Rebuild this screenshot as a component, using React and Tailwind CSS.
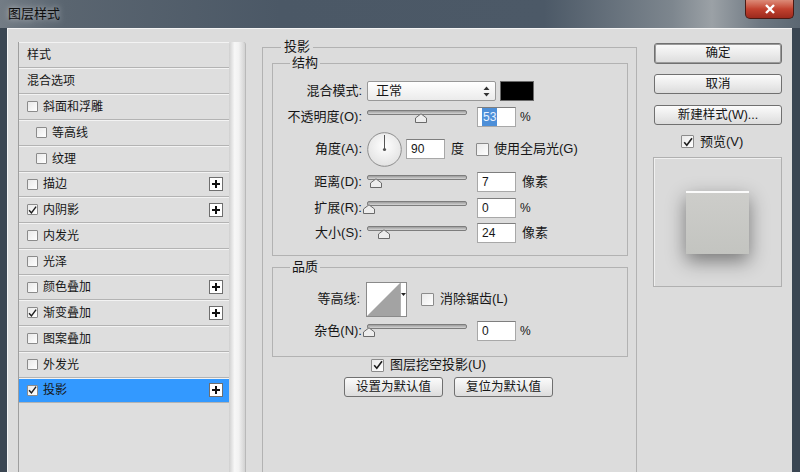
import React from 'react';

function Check({ checked, small }) {
  return (
    <span
      className={
        small
          ? 'inline-flex w-[11px] h-[11px] items-center justify-center border border-[#8b8b8b] bg-gradient-to-br from-[#e9e9e9] to-white shrink-0 rounded-[1px]'
          : 'inline-flex w-[13px] h-[13px] items-center justify-center border border-[#8b8b8b] bg-gradient-to-br from-[#e9e9e9] to-white shrink-0 rounded-[1px]'
      }
    >
      {checked && (
        <svg width="10" height="10" viewBox="0 0 10 10">
          <path d="M1.2 5.2 L3.8 8.2 L9 1.2" stroke="#1d1d1d" strokeWidth="1.6" fill="none" />
        </svg>
      )}
    </span>
  );
}

function Plus() {
  return (
    <span className="ml-auto mr-[6px] w-[14px] h-[14px] bg-white border border-[#6e6e6e] flex items-center justify-center shrink-0">
      <svg width="10" height="10" viewBox="0 0 10 10">
        <path d="M5 1 V9 M1 5 H9" stroke="#111" strokeWidth="2" />
      </svg>
    </span>
  );
}

function Slider({ pos }) {
  return (
    <div className="relative w-[100px] h-[14px] ml-[5px] shrink-0">
      <div className="h-[5px] rounded-[2px] border border-[#7d7d7d] bg-gradient-to-b from-[#9c9c9c] to-[#d6d6d6]" />
      <svg className="absolute top-[3px]" style={{ left: pos - 6 }} width="12" height="10" viewBox="0 0 12 10">
        <path d="M0.5 9.5 V5 L6 0.8 L11.5 5 V9.5 Z" fill="#ededed" stroke="#6a6a6a" />
      </svg>
    </div>
  );
}

function Field({ children, ml = 'ml-[10px]' }) {
  return (
    <div className={`${ml} w-[39px] h-[20px] bg-white border border-[#a8a8a8] border-t-[#7e7e7e] flex items-center pl-[4px] text-[12px] shrink-0`}>
      {children}
    </div>
  );
}

function Label({ children, w = 'w-[89px]' }) {
  return <div className={`${w} text-right text-[13px] shrink-0 whitespace-nowrap`}>{children}</div>;
}

function Btn({ children, className = '' }) {
  return (
    <div
      className={`h-[20px] rounded-[3px] border border-[#707070] bg-gradient-to-b from-[#fbfbfb] via-[#ececec] to-[#dcdcdc] text-[12.5px] flex items-center justify-center shrink-0 ${className}`}
    >
      {children}
    </div>
  );
}

const rows = [
  { t: '样式', h: 'h-[26px]' },
  { t: '混合选项', h: 'h-[26px]' },
  { t: '斜面和浮雕', cb: false, h: 'h-[26px]' },
  { t: '等高线', cb: false, indent: true, h: 'h-[26px]' },
  { t: '纹理', cb: false, indent: true, h: 'h-[26px]' },
  { t: '描边', cb: false, plus: true, h: 'h-[25px]' },
  { t: '内阴影', cb: true, plus: true, h: 'h-[26px]' },
  { t: '内发光', cb: false, h: 'h-[26px]' },
  { t: '光泽', cb: false, h: 'h-[26px]' },
  { t: '颜色叠加', cb: false, plus: true, h: 'h-[25px]' },
  { t: '渐变叠加', cb: true, plus: true, h: 'h-[26px]' },
  { t: '图案叠加', cb: false, h: 'h-[26px]' },
  { t: '外发光', cb: false, h: 'h-[26px]' },
  { t: '投影', cb: true, plus: true, sel: true, h: 'h-[25px]' },
];

export default function App() {
  return (
    <div className="w-[800px] h-[472px] overflow-hidden bg-[#3a4652] font-['Liberation_Sans','Noto_Sans_CJK_SC',sans-serif] text-[#161616] flex flex-col">
      {/* Title bar */}
      <div className="h-[28px] shrink-0 flex items-start bg-[linear-gradient(90deg,#737c85_0%,#5a6570_8%,#4b5866_35%,#4c5967_68%,#7d868e_84%,#9ba1a6_89%,#6e7882_95%,#5b6772_100%)]">
        <div className="pl-[8px] leading-[28px] text-[13px] text-[#0d0d0d] [text-shadow:0_0_6px_rgba(255,255,255,0.7)]">图层样式</div>
        <div className="ml-auto mr-[6px] w-[49px] h-[19px] rounded-b-[5px] border border-t-0 border-[#4a1a14] bg-gradient-to-b from-[#dc8a78] via-[#c2412f] to-[#9c2a1d] flex items-center justify-center">
          <svg width="12" height="10" viewBox="0 0 12 10">
            <path d="M2 1 L10 9 M10 1 L2 9" stroke="#fff" strokeWidth="2.4" />
          </svg>
        </div>
      </div>

      {/* Body */}
      <div className="flex-1 ml-[7px] mr-[8px] bg-[#dcdcdc] border-l border-t border-[#f4f4f4] flex items-start overflow-hidden">
        {/* Left list */}
        <div className="ml-[10px] mt-[13px] flex shrink-0">
          <div className="w-[211px] h-[440px] border-l border-[#9e9e9e] bg-[#dedede] text-[12px]">
            {rows.map((r) => (
              <div
                key={r.t}
                className={`${r.h} flex items-center border-b border-[#b3b3b3] shadow-[inset_0_1px_0_#f3f3f3] ${r.sel ? 'bg-[#3399ff]' : ''}`}
              >
                {r.cb === undefined ? (
                  <span className="pl-[8px]">{r.t}</span>
                ) : (
                  <>
                    <span className={r.indent ? 'pl-[17px] flex' : 'pl-[8px] flex'}>
                      <Check small checked={r.cb} />
                    </span>
                    <span className="ml-[5px]">{r.t}</span>
                    {r.plus && <Plus />}
                  </>
                )}
              </div>
            ))}
          </div>
          <div className="w-[17px] h-[440px] rounded-t-[3px] border-r border-[#b9b9b9] bg-[linear-gradient(90deg,#cfcfcf_0%,#f7f7f7_35%,#f2f2f2_60%,#d2d2d2_100%)]" />
        </div>

        {/* Middle */}
        <fieldset className="ml-[16px] mt-[10px] w-[375px] h-[440px] border border-b-0 border-[#b2b2b2] shrink-0">
          <legend className="ml-[18px] px-[3px] text-[13px] leading-[16px]">投影</legend>

          <fieldset className="ml-[9px] w-[356px] border border-[#b2b2b2] pt-[7px] pb-[9px]">
            <legend className="ml-[17px] px-[2px] text-[13px] leading-[16px]">结构</legend>
            <div className="h-[26px] flex items-center">
              <Label>混合模式:</Label>
              <div className="ml-[5px] w-[129px] h-[20px] border border-[#989898] bg-gradient-to-b from-white to-[#ebebeb] rounded-[2px] flex items-center pl-[8px] pr-[5px] justify-between text-[13px] shrink-0">
                <span>正常</span>
                <svg width="7" height="11" viewBox="0 0 7 11">
                  <path d="M3.5 0.5 L6.5 4 H0.5 Z M3.5 10.5 L6.5 7 H0.5 Z" fill="#333" />
                </svg>
              </div>
              <div className="ml-[4px] w-[34px] h-[20px] bg-black border border-[#6a6a6a] shrink-0" />
            </div>
            <div className="h-[26px] flex items-center">
              <Label>不透明度(O):</Label>
              <Slider pos={54} />
              <Field>
                <span className="bg-[#4d8fd8] text-[#e8f1ff] px-[1px]">53</span>
              </Field>
              <span className="ml-[4px] text-[12px]">%</span>
            </div>
            <div className="h-[38px] flex items-center">
              <Label>角度(A):</Label>
              <svg className="ml-[5px] shrink-0" width="35" height="35" viewBox="0 0 35 35">
                <defs>
                  <radialGradient id="dg" cx="50%" cy="40%" r="60%">
                    <stop offset="0%" stopColor="#ffffff" />
                    <stop offset="100%" stopColor="#e2e2e2" />
                  </radialGradient>
                </defs>
                <circle cx="17.5" cy="17.5" r="16.8" fill="url(#dg)" stroke="#8d8d8d" />
                <path d="M17.5 17.5 V3" stroke="#555" strokeWidth="1" />
                <circle cx="17.5" cy="17.5" r="1.6" fill="#555" />
              </svg>
              <Field ml="ml-[4px]">90</Field>
              <span className="ml-[6px] text-[13px]">度</span>
              <span className="ml-[12px] flex">
                <Check checked={false} />
              </span>
              <span className="ml-[5px] text-[13px] whitespace-nowrap">使用全局光(G)</span>
            </div>
            <div className="h-[28px] flex items-center">
              <Label>距离(D):</Label>
              <Slider pos={9} />
              <Field>7</Field>
              <span className="ml-[6px] text-[13px]">像素</span>
            </div>
            <div className="h-[24px] flex items-center">
              <Label>扩展(R):</Label>
              <Slider pos={2} />
              <Field>0</Field>
              <span className="ml-[4px] text-[12px]">%</span>
            </div>
            <div className="h-[26px] flex items-center">
              <Label>大小(S):</Label>
              <Slider pos={17} />
              <Field>24</Field>
              <span className="ml-[6px] text-[13px]">像素</span>
            </div>
          </fieldset>

          <fieldset className="ml-[9px] mt-[3px] w-[356px] border border-[#b2b2b2] pt-[5px] pb-[12px]">
            <legend className="ml-[17px] px-[2px] text-[13px] leading-[16px]">品质</legend>
            <div className="h-[38px] flex items-center">
              <Label w="w-[87px]">等高线:</Label>
              <div className="ml-[6px] w-[41px] h-[35px] border border-[#8a8a8a] bg-white flex shrink-0">
                <svg width="33" height="33" viewBox="0 0 33 33" className="shrink-0">
                  <path d="M0 33 L33 0 V33 Z" fill="#a3a3a3" />
                </svg>
                <div className="flex-1 border-l border-[#b0b0b0] flex items-start justify-center pt-[10px]">
                  <svg width="5" height="3" viewBox="0 0 5 3">
                    <path d="M0 0 H5 L2.5 3 Z" fill="#222" />
                  </svg>
                </div>
              </div>
              <span className="ml-[14px] flex">
                <Check checked={false} />
              </span>
              <span className="ml-[6px] text-[13px] whitespace-nowrap">消除锯齿(L)</span>
            </div>
            <div className="h-[26px] flex items-center">
              <Label>杂色(N):</Label>
              <Slider pos={2} />
              <Field>0</Field>
              <span className="ml-[4px] text-[12px]">%</span>
            </div>
          </fieldset>

          <div className="h-[16px] flex items-center ml-[108px]">
            <Check checked />
            <span className="ml-[6px] text-[13px] whitespace-nowrap">图层挖空投影(U)</span>
          </div>
          <div className="mt-[4px] flex ml-[81px] gap-[11px]">
            <Btn className="w-[99px]">设置为默认值</Btn>
            <Btn className="w-[99px]">复位为默认值</Btn>
          </div>
        </fieldset>

        {/* Right column */}
        <div className="ml-[17px] mt-[14px] w-[128px] flex flex-col shrink-0">
          <Btn className="h-[21px] border-[#2e2e2e] shadow-[inset_0_0_0_1px_#9a9a9a]">确定</Btn>
          <Btn className="mt-[10px] h-[19px]">取消</Btn>
          <Btn className="mt-[11px] h-[19px]">新建样式(W)...</Btn>
          <div className="mt-[9px] h-[15px] flex items-center ml-[27px]">
            <Check checked />
            <span className="ml-[6px] text-[13px]">预览(V)</span>
          </div>
          <div className="mt-[8px] -ml-[1px] w-[129px] h-[130px] border border-[#b0b0b0] shadow-[inset_1px_1px_0_#f0f0f0] bg-[#dadada]">
            <div className="ml-[32px] mt-[33px] w-[63px] h-[63px] border-t-2 border-[#fbfbfb] bg-gradient-to-b from-[#cdcdca] to-[#c3c4c0] shadow-[0_7px_18px_rgba(0,0,0,0.45)]" />
          </div>
        </div>
      </div>
    </div>
  );
}
